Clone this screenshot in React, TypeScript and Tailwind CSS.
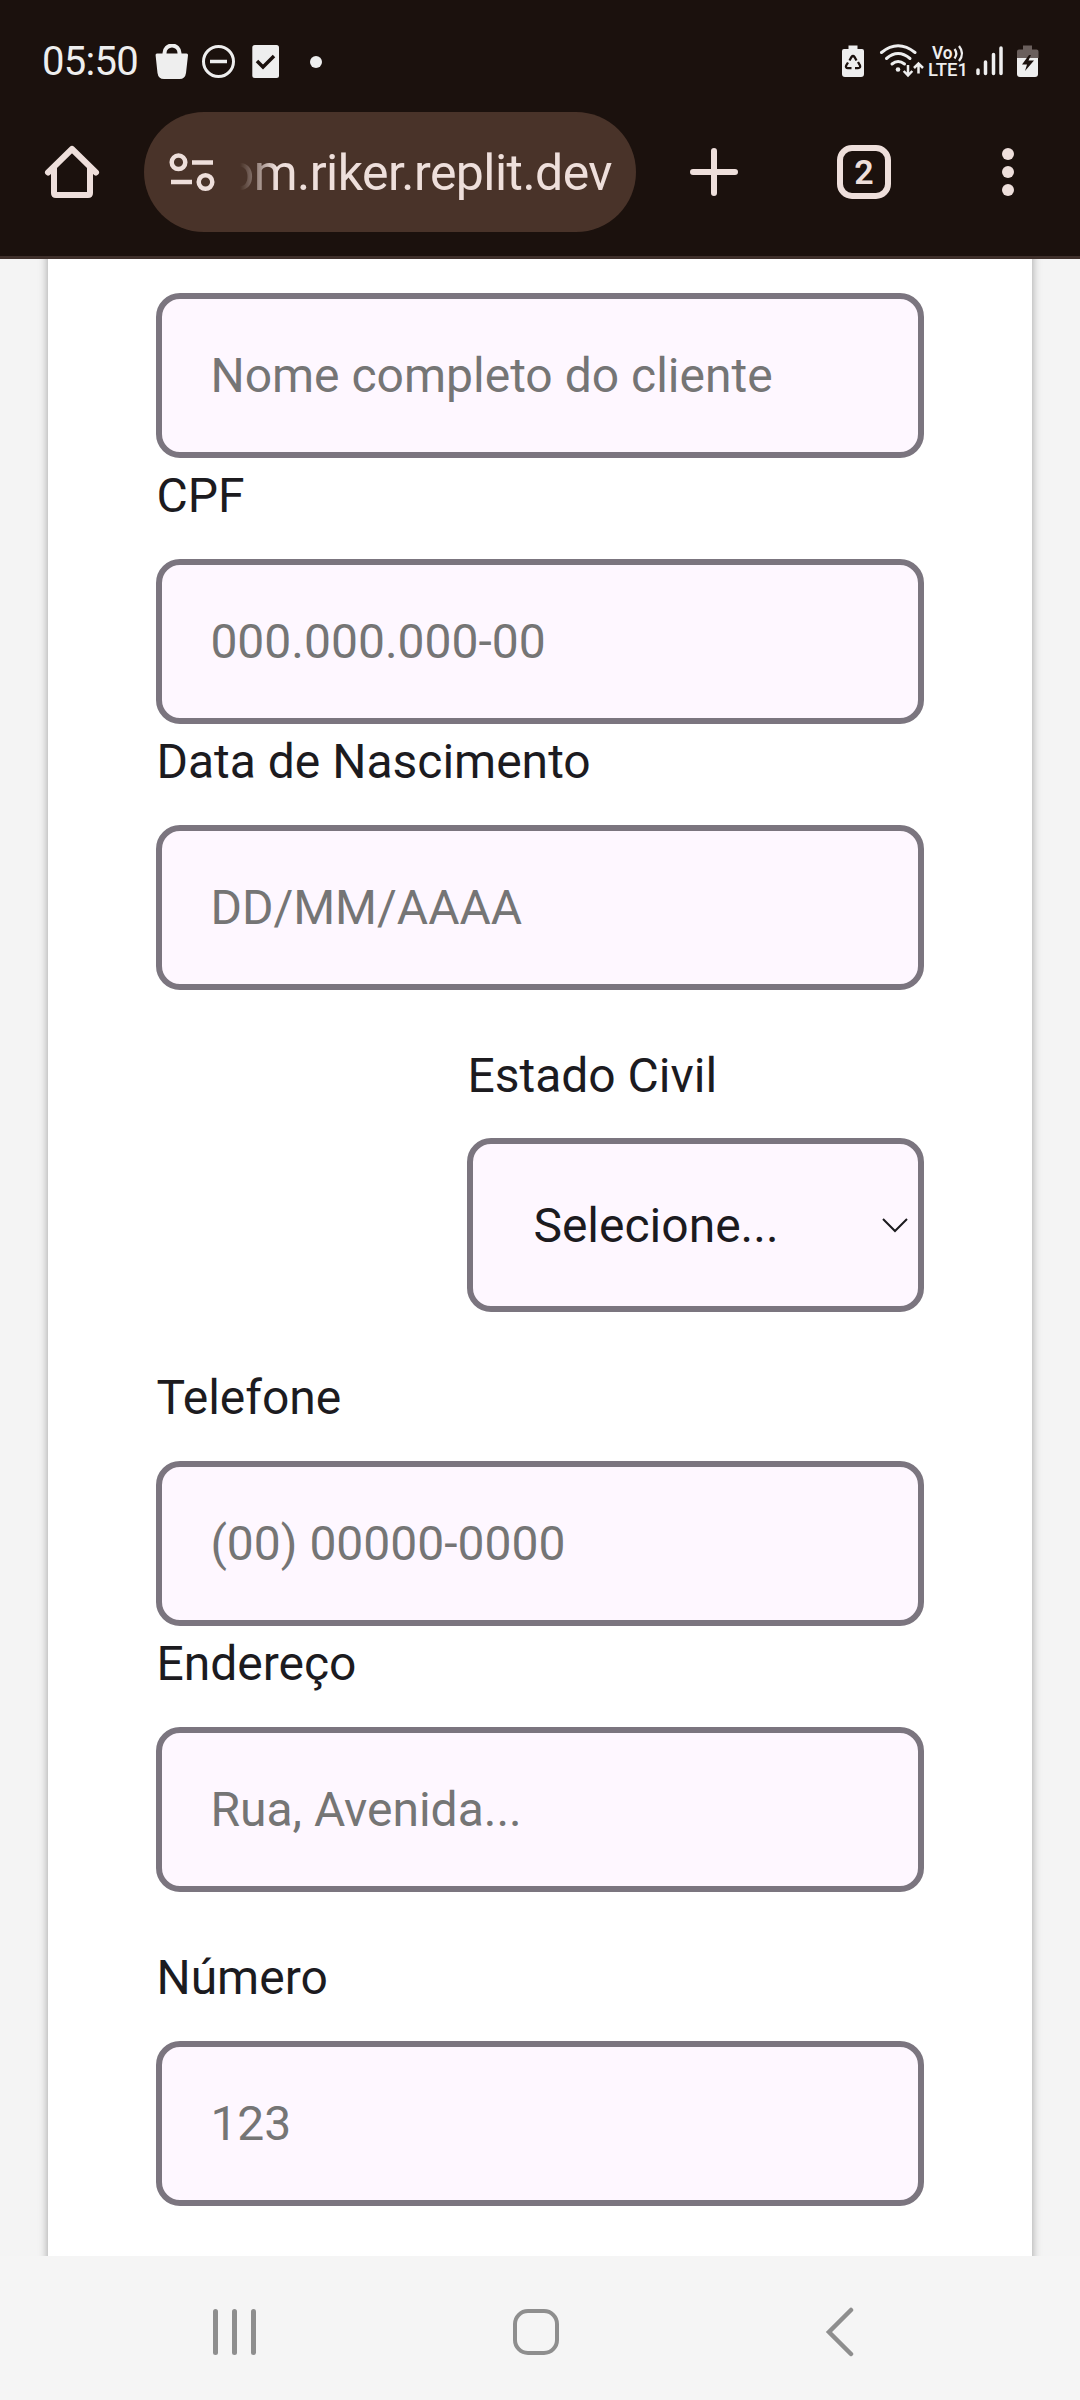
type FieldProps = { label?: string; placeholder: string; className?: string };

function Field({ label, placeholder, className = "" }: FieldProps) {
  return (
    <label className={"flex flex-col " + className}>
      {label && <span className="flex h-[101px] items-start pt-[8px] text-[48px] leading-[60px]">{label}</span>}
      <input
        placeholder={placeholder}
        className="h-[165px] w-full rounded-[24px] border-6 border-[#7b757f] bg-[#fef7ff] pr-10 pl-12 text-[48px] leading-[60px] text-[#1c1b1f] outline-none placeholder:text-[#757575]"
      />
    </label>
  );
}

function StatusBar() {
  return (
    <div className="flex h-[112px] items-start justify-between pt-[40px] pr-[40px] pl-[42px] text-[#eeeeee]">
      <div className="flex items-center">
        <span className="w-[113px] text-[40px] leading-[44px] tracking-[-0.7px]">05:50</span>
        <svg className="h-[36px] w-[34px]" viewBox="0 0 34 36" fill="none">
          <path d="M9.500 11V9a7 7 0 0 1 15 0v2" stroke="currentColor" strokeWidth="4" />
          <path d="M2 9.500h29.500q1.700 0 1.500 1.700l-2 17.800q-.8 6-6.500 6H9q-5.700 0-6.500-6L.6 11.200Q.4 9.500 2 9.500Z" fill="currentColor" />
        </svg>
        <svg className="ml-[12px] h-[36px] w-[36px]" viewBox="0 0 36 36" fill="none" stroke="currentColor">
          <circle cx="17.500" cy="17.500" r="15" strokeWidth="3" />
          <path d="M9 17.500h17" strokeWidth="3.500" />
        </svg>
        <svg className="ml-[15px] h-[36px] w-[28px]" viewBox="0 0 28 36">
          <rect x="0.300" y="1" width="26.700" height="33" rx="2.500" fill="currentColor" />
          <path d="m5 17 6 6L22 12" fill="none" stroke="#1b110d" strokeWidth="3.500" />
        </svg>
        <span className="ml-[30px] size-3 rounded-full bg-[#eeeeee]" />
      </div>
      <svg className="mt-[2px] h-[38px] w-[200px]" viewBox="840 42 200 38" fill="none">
        <path d="M848.500 45.500h9v3.500h4.500q2 0 2 2v23q0 3-3 3h-16q-3 0-3-3V51q0-2 2-2h4.500Z" fill="currentColor" />
        <g stroke="#1b110d" strokeWidth="2.300" fill="none">
          <path d="m849.500 60.500 2-3.500q1.500-2 3 0l2 3.500" />
          <path d="m858 62 2 3.500q.8 2.500-2 2.700h-3" />
          <path d="M851.500 68.200H848q-2.800-.2-1.800-2.700l1.800-3" />
        </g>
        <g stroke="currentColor" strokeWidth="3" strokeLinecap="round">
          <path d="M881.500 52.500q16.500-13.500 33.500 0" />
          <path d="M886.500 58.500q11.500-10 23.500 0" />
          <path d="M892 64q6-5 12.500 0" />
        </g>
        <circle cx="898" cy="69.500" r="2.300" fill="currentColor" />
        <g stroke="currentColor" strokeWidth="2.500">
          <path d="M908 65v10.500M903.700 71l4.300 4.500 4.300-4.500" />
          <path d="M918.500 73.500V63.500M914 68l4.500-4.500L923 68" />
        </g>
        <text x="932" y="59.300" fontSize="18" fontWeight="600" fill="currentColor" className="font-[Roboto,sans-serif]" textLength="20.500" lengthAdjust="spacingAndGlyphs">Vo</text>
        <path d="M954.500 49q3.500 4.500 0 9.500M959 46q6 7.500 0 15" stroke="currentColor" strokeWidth="2.300" />
        <text x="928" y="76.300" fontSize="18" fontWeight="500" fill="currentColor" className="font-[Roboto,sans-serif]" textLength="40" lengthAdjust="spacingAndGlyphs">LTE1</text>
        <path d="M978 70v3.500M985.500 62v11.500M993.500 54.500v19M1001 48v25.500" stroke="currentColor" strokeWidth="3.500" strokeLinecap="round" />
        <path d="M1023 45.500h9v4h4.500q2 0 2 2V58H1017v-6.500q0-2 2-2h4Z" fill="#6a5f5c" />
        <path d="M1017 58h21v16q0 3-3 3h-15q-3 0-3-3Z" fill="currentColor" />
        <path d="m1029 55-7 9.500h5l-2 6.500 9-10.500h-5.500l2.500-5.500Z" fill="#1b110d" />
      </svg>
    </div>
  );
}

function BrowserBar() {
  return (
    <div className="flex h-[120px] items-center text-[#eedfdb]">
      <svg className="ml-[44px] size-14 shrink-0" viewBox="0 0 56 56" fill="none" stroke="currentColor" strokeWidth="6">
        <path d="M4 28.500 28 5l24 23.500" strokeLinecap="round" strokeLinejoin="round" />
        <path d="M10 24v25q0 2 2 2h32q2 0 2-2V24" />
      </svg>
      <div className="ml-[44px] flex h-[120px] w-[492px] shrink-0 items-center overflow-hidden rounded-full bg-[#493329]">
        <svg className="ml-[25px] h-[40px] w-[48px] shrink-0" viewBox="169 152 48 40" fill="none" stroke="currentColor" strokeWidth="4.500">
          <circle cx="178.500" cy="162.300" r="6.800" />
          <path d="M192 162.500h21M171 182h21" />
          <circle cx="205.500" cy="182" r="6.800" />
        </svg>
        <div className="ml-[23px] flex w-[372px] justify-end overflow-hidden pt-[2px] [mask-image:linear-gradient(to_right,transparent,black_36px)]">
          <span className="text-[50px] leading-[64px] tracking-[-0.55px] whitespace-nowrap">om.riker.replit.dev</span>
        </div>
      </div>
      <svg className="ml-[54px] size-12 shrink-0" viewBox="0 0 48 48" stroke="currentColor" strokeWidth="6" strokeLinecap="round">
        <path d="M24 3v42M3 24h42" />
      </svg>
      <div className="ml-[99px] flex size-[54px] shrink-0 items-center justify-center rounded-[15px] border-6 border-[#eedfdb] text-[34px] leading-none font-semibold">
        2
      </div>
      <div className="ml-[111px] flex flex-col gap-[6px]">
        <span className="size-3 rounded-full bg-[#eedfdb]" />
        <span className="size-3 rounded-full bg-[#eedfdb]" />
        <span className="size-3 rounded-full bg-[#eedfdb]" />
      </div>
    </div>
  );
}

function NavigationBar() {
  return (
    <nav className="flex h-[144px] items-center bg-[#f5f5f5] pt-[8px] text-[#8e8e8e]">
      <div className="ml-[213px] flex gap-[14.500px]">
        <span className="h-[46px] w-[4.500px] rounded-full bg-[#8e8e8e]" />
        <span className="h-[46px] w-[4.500px] rounded-full bg-[#8e8e8e]" />
        <span className="h-[46px] w-[4.500px] rounded-full bg-[#8e8e8e]" />
      </div>
      <span className="ml-[257.500px] size-[46px] rounded-[15px] border-4 border-[#8e8e8e]" />
      <svg className="ml-[265.500px] h-[50px] w-[30px]" viewBox="0 0 30 50" fill="none" stroke="currentColor" strokeWidth="4.500" strokeLinecap="round">
        <path d="M26 3 4 25l22 22" />
      </svg>
    </nav>
  );
}

export default function App() {
  return (
    <div className="flex h-[2400px] w-[1080px] flex-col overflow-hidden bg-[#f4f4f4] font-[Roboto,sans-serif]">
      <header className="h-[259px] shrink-0 border-b-3 border-[#3f302b] bg-[#1b110d]">
        <StatusBar />
        <BrowserBar />
      </header>
      <main className="flex h-[1997px] shrink-0 flex-col overflow-hidden px-12">
        <form className="-mt-6 -mb-6 flex grow flex-col bg-white px-[108.400px] pt-[58px] text-[#1c1b1f] shadow-[0_3px_9px_rgba(0,0,0,0.35)]">
          <Field placeholder="Nome completo do cliente" />
          <Field label="CPF" placeholder="000.000.000-00" />
          <Field label="Data de Nascimento" placeholder="DD/MM/AAAA" />
          <div className="mt-12 ml-[311px] flex flex-col">
            <span className="h-[100px] pt-[8px] text-[48px] leading-[60px]">Estado Civil</span>
            <div className="flex h-[174px] items-center justify-between rounded-[24px] border-6 border-[#7b757f] bg-[#fef7ff] pr-[9px] pl-[60px]">
              <span className="pt-[2px] text-[48px] leading-[60px]">Selecione...</span>
              <svg className="h-[16px] w-[28px]" viewBox="0 0 28 16" fill="none" stroke="currentColor" strokeWidth="2">
                <path d="m2 2 12 12L26 2" />
              </svg>
            </div>
          </div>
          <Field className="mt-12" label="Telefone" placeholder="(00) 00000-0000" />
          <Field label="Endereço" placeholder="Rua, Avenida..." />
          <Field className="mt-12" label="Número" placeholder="123" />
        </form>
      </main>
      <NavigationBar />
    </div>
  );
}
